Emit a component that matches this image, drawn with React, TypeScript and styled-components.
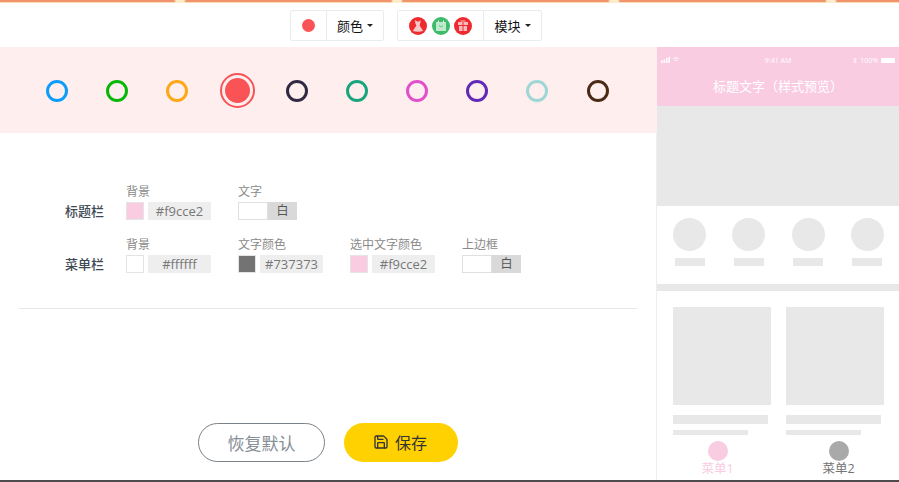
import React from "react";
import styled, { createGlobalStyle } from "styled-components";
import { Save } from "lucide-react";

const GlobalStyle = createGlobalStyle`
  html, body {
    margin: 0;
    padding: 0;
    height: 482px;
    overflow: hidden;
    background: #fff;
    font-family: "Open Sans", "Noto Sans CJK SC", sans-serif;
  }
  * { box-sizing: border-box; }
`;

const Page = styled.div`
  width: 899px;
  height: 482px;
  display: flex;
  flex-direction: column;
  overflow: hidden;
`;

const TopStrip = styled.div`
  height: 3px;
  flex: none;
  background:
    repeating-linear-gradient(
      90deg,
      transparent 0,
      transparent 174px,
      #fdeccb 176px,
      #fdeccb 184px,
      transparent 186px,
      transparent 217px
    ),
    linear-gradient(180deg, #f0946c 0, #f0946c 2px, #fcdcb8 2px, #fcdcb8 3px);
`;

const Toolbar = styled.div`
  height: 44px;
  flex: none;
  padding: 7px 67px 0 0;
  display: flex;
  justify-content: center;
  gap: 13px;
`;

const ToolGroup = styled.div`
  height: 31px;
  display: flex;
  border: 1px solid #e9ecef;
  border-radius: 2px;
`;

const ToolCell = styled.div<{ $width: number }>`
  width: ${(p) => p.$width}px;
  display: flex;
  align-items: center;
  justify-content: center;
  gap: 3px;
  font-size: 13px;
  color: #111;
  & + & {
    border-left: 1px solid #e9ecef;
  }
`;

const Caret = styled.span`
  width: 0;
  height: 0;
  margin-left: 1px;
  border-left: 3px solid transparent;
  border-right: 3px solid transparent;
  border-top: 3px solid #222;
`;

const CurrentDot = styled.span`
  width: 13px;
  height: 13px;
  border-radius: 50%;
  background: #f95355;
`;

const Main = styled.div`
  flex: 1;
  min-height: 0;
  display: flex;
`;

const Editor = styled.div`
  width: 657px;
  flex: none;
  display: flex;
  flex-direction: column;
`;

const SwatchBand = styled.div`
  height: 86px;
  flex: none;
  background: #feeeee;
  padding-left: 27px;
  display: flex;
  align-items: center;
`;

const SwatchSlot = styled.div`
  width: 60px;
  height: 40px;
  margin-top: 1px;
  display: flex;
  align-items: center;
  justify-content: center;
  &:last-child {
    margin-left: 1px;
  }
`;

const Swatch = styled.span<{ $color: string }>`
  width: 22px;
  height: 22px;
  border-radius: 50%;
  border: 3px solid ${(p) => p.$color};
`;

const ActiveSwatch = styled.span<{ $color: string }>`
  width: 35px;
  height: 35px;
  border-radius: 50%;
  border: 2px solid ${(p) => p.$color};
  padding: 3px;
  display: flex;
  &::before {
    content: "";
    flex: 1;
    border-radius: 50%;
    background: ${(p) => p.$color};
  }
`;

const EditorBody = styled.div`
  flex: 1;
  min-height: 0;
  border-right: 1px solid #eeeeee;
`;

const Form = styled.div`
  height: 176px;
  margin: 0 19px;
  padding: 50px 0 0 46px;
  border-bottom: 1px solid #e9e9e9;
  display: flex;
  flex-direction: column;
  gap: 16px;
`;

const FormRow = styled.div`
  display: flex;
  align-items: flex-end;
  height: 37px;
`;

const RowLabel = styled.div`
  width: 61px;
  flex: none;
  margin-bottom: 1px;
  font-size: 13px;
  font-weight: 500;
  line-height: 16px;
  color: #3f4a54;
`;

const Field = styled.div`
  width: 112px;
  flex: none;
  display: flex;
  flex-direction: column;
  gap: 2px;
`;

const FieldLabel = styled.div`
  font-size: 12px;
  line-height: 18px;
  height: 17px;
  color: #8a8a8a;
`;

const ColorInput = styled.div`
  display: flex;
  gap: 4px;
  height: 18px;
`;

const ColorChip = styled.span<{ $color: string }>`
  width: 18px;
  height: 18px;
  background: ${(p) => p.$color};
  border: 1px solid #e4e4e4;
`;

const HexValue = styled.span`
  width: 63px;
  height: 18px;
  background: #eeeeee;
  color: #777;
  font-size: 13px;
  line-height: 18px;
  text-align: center;
`;

const Toggle = styled.div`
  width: 59px;
  height: 18px;
  display: flex;
  background: #d9d9d9;
`;

const ToggleKnob = styled.span`
  width: 30px;
  background: #fff;
  border: 1px solid #e0e0e0;
`;

const ToggleText = styled.span`
  flex: 1;
  text-align: center;
  font-size: 12px;
  line-height: 18px;
  color: #555;
`;

const Actions = styled.div`
  margin-top: 114px;
  display: flex;
  justify-content: center;
  gap: 19px;
`;

const ResetButton = styled.button`
  width: 127px;
  height: 39px;
  padding: 0;
  border: 1px solid #7a8288;
  border-radius: 20px;
  background: #fff;
  color: #868e96;
  font: 400 17px "Noto Sans CJK SC", sans-serif;
`;

const SaveButton = styled.button`
  width: 114px;
  height: 39px;
  padding: 0 2px 1px 0;
  border: none;
  border-radius: 20px;
  background: #ffd100;
  color: #333;
  font: 400 16px "Noto Sans CJK SC", sans-serif;
  display: flex;
  align-items: center;
  justify-content: center;
  gap: 6px;
`;

const Preview = styled.div`
  flex: 1;
  min-width: 0;
  display: flex;
  flex-direction: column;
`;

const PhoneHeader = styled.div`
  height: 59px;
  flex: none;
  background: #f9cce2;
  color: #fff;
`;

const StatusBar = styled.div`
  height: 26px;
  padding: 0 4px 0 4px;
  display: flex;
  align-items: center;
  justify-content: space-between;
  font-size: 7px;
`;

const StatusSide = styled.span`
  width: 70px;
  display: flex;
  align-items: center;
  gap: 3px;
`;

const StatusRight = styled(StatusSide)`
  justify-content: flex-end;
`;

const BatteryIcon = styled.span`
  width: 14px;
  height: 5px;
  background: #fff;
  border-radius: 1px;
`;

const PhoneTitle = styled.div`
  text-align: center;
  font-size: 13px;
  line-height: 26px;
`;

const Banner = styled.div`
  height: 100px;
  flex: none;
  background: #e8e8e8;
`;

const IconGrid = styled.div`
  height: 78px;
  flex: none;
  padding: 12px 15px 0 16px;
  display: flex;
  justify-content: space-between;
`;

const IconCell = styled.div`
  width: 33px;
  display: flex;
  flex-direction: column;
  align-items: center;
  gap: 7px;
`;

const IconCircle = styled.span`
  width: 33px;
  height: 33px;
  border-radius: 50%;
  background: #e8e8e8;
`;

const IconLabel = styled.span`
  width: 30px;
  height: 8px;
  background: #e8e8e8;
`;

const Divider = styled.div`
  height: 7px;
  flex: none;
  background: #e8e8e8;
`;

const CardGrid = styled.div`
  flex: 1;
  min-height: 0;
  padding: 16px 15px 0 16px;
  display: flex;
  justify-content: space-between;
`;

const Card = styled.div`
  width: 98px;
  display: flex;
  flex-direction: column;
`;

const CardImage = styled.div`
  height: 98px;
  background: #e8e8e8;
`;

const CardLine = styled.div<{ $width: number; $height: number; $top: number }>`
  width: ${(p) => p.$width}px;
  height: ${(p) => p.$height}px;
  margin-top: ${(p) => p.$top}px;
  background: #e8e8e8;
`;

const TabBar = styled.div`
  height: 45px;
  flex: none;
  display: flex;
  background: #fff;
`;

const Tab = styled.div<{ $color: string; $dot: string }>`
  flex: 1;
  padding-top: 6px;
  display: flex;
  flex-direction: column;
  align-items: center;
  font-size: 12.5px;
  line-height: 16px;
  color: ${(p) => p.$color};
  &::before {
    content: "";
    width: 20px;
    height: 20px;
    border-radius: 50%;
    background: ${(p) => p.$dot};
  }
`;

const BottomStrip = styled.div`
  height: 2px;
  flex: none;
  background: #4c4c4c;
`;

const ModuleIcon = styled.svg`
  width: 18px;
  height: 18px;
  display: block;
`;

const ModuleIcons = styled.div`
  display: flex;
  gap: 4.5px;
`;

const swatchColors = [
  "#0c9cfb",
  "#06b806",
  "#ffa714",
  "#f95355",
  "#2f2942",
  "#18a57e",
  "#e24fcb",
  "#6029b8",
  "#9ed6d6",
  "#4a2a16",
];

const DressIcon = () => (
  <ModuleIcon viewBox="0 0 18 18">
    <circle cx="9" cy="9" r="9" fill="#ee2a2e" />
    <path
      d="M7 3.2l.8 1.2h2.4l.8-1.2.6.4-.4 3L10.6 8.4 14.2 14c-3.4 1-7 1-10.4 0l3.6-5.6-1-1.8-.4-3z"
      fill="#f7c9ca"
    />
  </ModuleIcon>
);

const CalendarIcon = () => (
  <ModuleIcon viewBox="0 0 18 18">
    <circle cx="9" cy="9" r="9" fill="#3dbb6b" />
    <rect x="4" y="5" width="10" height="9" fill="#bfe9cd" />
    <path d="M6.5 3.5v2M11.5 3.5v2" stroke="#e6f7ec" strokeWidth="1" />
    <path d="M7 8.5l2 1.5 2-1.5" stroke="#3dbb6b" strokeWidth="0.8" fill="none" />
  </ModuleIcon>
);

const GiftIcon = () => (
  <ModuleIcon viewBox="0 0 18 18">
    <circle cx="9" cy="9" r="9" fill="#ee2a2e" />
    <rect x="4" y="5" width="10" height="3" fill="#f7bcbd" />
    <rect x="5" y="9" width="8" height="5" fill="#f7bcbd" />
    <path d="M9 5v9" stroke="#ee2a2e" strokeWidth="1" />
    <path d="M6.5 4h5" stroke="#f7bcbd" strokeWidth="1" />
  </ModuleIcon>
);

const StatusSignal = () => (
  <svg width="20" height="6" viewBox="0 0 20 6">
    <g fill="#fff">
      <rect x="0" y="3.5" width="1.5" height="2.5" />
      <rect x="2.5" y="2.5" width="1.5" height="3.5" />
      <rect x="5" y="1" width="1.5" height="5" />
      <rect x="7.5" y="0" width="1.5" height="6" />
    </g>
    <path
      d="M12 2c2-1.6 4-1.6 6 0M13.5 3.6c1-.8 2-.8 3 0M15 5.4l.3-.3"
      stroke="#fff"
      strokeWidth="1"
      fill="none"
    />
  </svg>
);

const BluetoothMark = () => (
  <svg width="4" height="7" viewBox="0 0 4 7">
    <path d="M.3 1.8L3.4 4.8 2 6V1L3.4 2.2.3 5.2" stroke="#fff" strokeWidth="0.6" fill="none" />
  </svg>
);

export default function App() {
  return (
    <Page>
      <GlobalStyle />
      <TopStrip />
      <Toolbar>
        <ToolGroup>
          <ToolCell $width={35}>
            <CurrentDot />
          </ToolCell>
          <ToolCell $width={57}>
            颜色
            <Caret />
          </ToolCell>
        </ToolGroup>
        <ToolGroup>
          <ToolCell $width={85}>
            <ModuleIcons>
              <DressIcon />
              <CalendarIcon />
              <GiftIcon />
            </ModuleIcons>
          </ToolCell>
          <ToolCell $width={58}>
            模块
            <Caret />
          </ToolCell>
        </ToolGroup>
      </Toolbar>
      <Main>
        <Editor>
          <SwatchBand>
            {swatchColors.map((color, i) => (
              <SwatchSlot key={color}>
                {i === 3 ? <ActiveSwatch $color={color} /> : <Swatch $color={color} />}
              </SwatchSlot>
            ))}
          </SwatchBand>
          <EditorBody>
            <Form>
              <FormRow>
                <RowLabel>标题栏</RowLabel>
                <Field>
                  <FieldLabel>背景</FieldLabel>
                  <ColorInput>
                    <ColorChip $color="#f9cce2" />
                    <HexValue>#f9cce2</HexValue>
                  </ColorInput>
                </Field>
                <Field>
                  <FieldLabel>文字</FieldLabel>
                  <Toggle>
                    <ToggleKnob />
                    <ToggleText>白</ToggleText>
                  </Toggle>
                </Field>
              </FormRow>
              <FormRow>
                <RowLabel>菜单栏</RowLabel>
                <Field>
                  <FieldLabel>背景</FieldLabel>
                  <ColorInput>
                    <ColorChip $color="#ffffff" />
                    <HexValue>#ffffff</HexValue>
                  </ColorInput>
                </Field>
                <Field>
                  <FieldLabel>文字颜色</FieldLabel>
                  <ColorInput>
                    <ColorChip $color="#737373" />
                    <HexValue>#737373</HexValue>
                  </ColorInput>
                </Field>
                <Field>
                  <FieldLabel>选中文字颜色</FieldLabel>
                  <ColorInput>
                    <ColorChip $color="#f9cce2" />
                    <HexValue>#f9cce2</HexValue>
                  </ColorInput>
                </Field>
                <Field>
                  <FieldLabel>上边框</FieldLabel>
                  <Toggle>
                    <ToggleKnob />
                    <ToggleText>白</ToggleText>
                  </Toggle>
                </Field>
              </FormRow>
            </Form>
            <Actions>
              <ResetButton>恢复默认</ResetButton>
              <SaveButton>
                <Save size={16} strokeWidth={2} />
                保存
              </SaveButton>
            </Actions>
          </EditorBody>
        </Editor>
        <Preview>
          <PhoneHeader>
            <StatusBar>
              <StatusSide>
                <StatusSignal />
              </StatusSide>
              <span>9:41 AM</span>
              <StatusRight>
                <BluetoothMark />
                100%
                <BatteryIcon />
              </StatusRight>
            </StatusBar>
            <PhoneTitle>标题文字（样式预览）</PhoneTitle>
          </PhoneHeader>
          <Banner />
          <IconGrid>
            {[0, 1, 2, 3].map((n) => (
              <IconCell key={n}>
                <IconCircle />
                <IconLabel />
              </IconCell>
            ))}
          </IconGrid>
          <Divider />
          <CardGrid>
            {[0, 1].map((n) => (
              <Card key={n}>
                <CardImage />
                <CardLine $width={95} $height={9} $top={10} />
                <CardLine $width={75} $height={5} $top={6} />
              </Card>
            ))}
          </CardGrid>
          <TabBar>
            <Tab $color="#f9cce2" $dot="#f9cce2">菜单1</Tab>
            <Tab $color="#737373" $dot="#a9a9a9">菜单2</Tab>
          </TabBar>
        </Preview>
      </Main>
      <BottomStrip />
    </Page>
  );
}
